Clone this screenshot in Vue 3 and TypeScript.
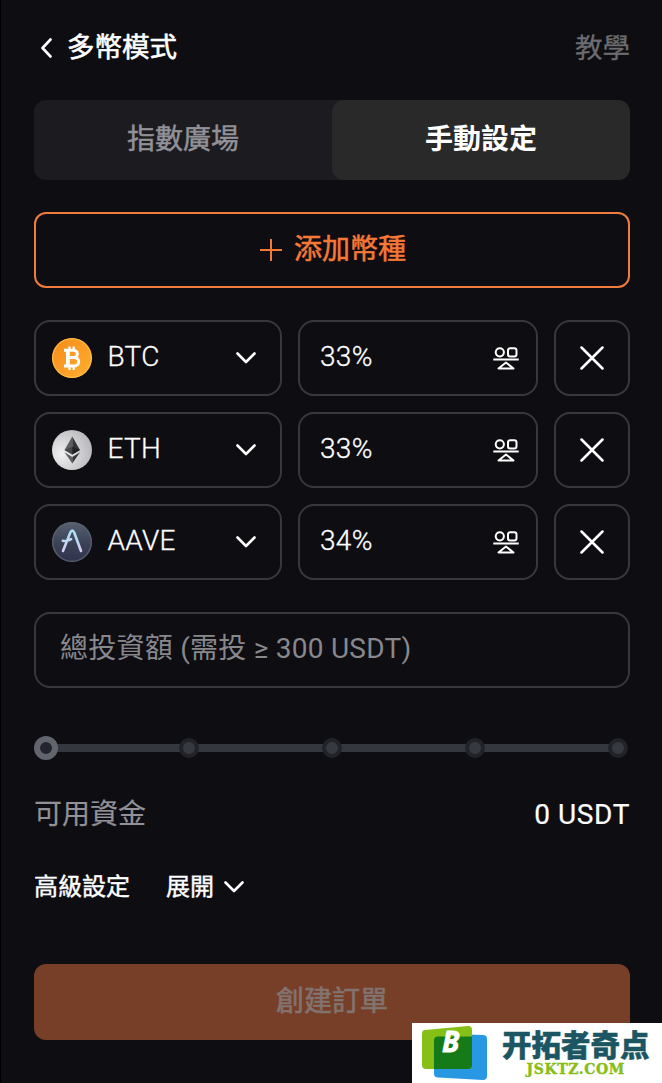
<script setup lang="ts">
interface Coin {
  symbol: string
  percent: number
}

const coins: Coin[] = [
  { symbol: 'BTC', percent: 33 },
  { symbol: 'ETH', percent: 33 },
  { symbol: 'AAVE', percent: 34 },
]
const stops = [0, 25, 50, 75, 100]
</script>

<template>
  <main class="page">
    <header class="header">
      <div class="heading">
        <svg class="back" width="12" height="20" viewBox="0 0 12 20"><path d="M10.500 1.500 2.500 10l8 8.500" /></svg>
        <h1>多幣模式</h1>
      </div>
      <span class="guide">教學</span>
    </header>

    <nav class="tabs">
      <button class="tab"><span>指數廣場</span></button>
      <button class="tab active"><span>手動設定</span></button>
    </nav>

    <button class="add">
      <svg width="22" height="24" viewBox="0 0 22 24"><path d="M11 1v22M0 12h22" /></svg>
      <span>添加幣種</span>
    </button>

    <section class="coins">
      <div v-for="coin in coins" :key="coin.symbol" class="row">
        <div class="box select">
          <svg v-if="coin.symbol === 'BTC'" class="logo" viewBox="0 0 40 40">
            <defs>
              <linearGradient id="btc" x1="0" y1="0" x2="1" y2="1">
                <stop offset="0" stop-color="#f58a1c" /><stop offset="1" stop-color="#ffb02e" />
              </linearGradient>
            </defs>
            <circle cx="20" cy="20" r="20" fill="url(#btc)" />
            <circle cx="20" cy="20" r="19.300" fill="none" stroke="#ffc44d" stroke-width="1" />
            <g class="coin-mark">
              <path d="M12 12.300h9c5.800 0 5.800 7.200 0 7.200h-5M16 19.500h6c6.300 0 6.300 8.400 0 8.400H12" stroke-width="3" />
              <path d="M15.900 11.500v17" stroke-width="3.800" />
              <path d="M17.500 8.500v4M21.700 8.500v4M17.500 28v4M21.700 28v4" stroke-width="2.200" />
            </g>
          </svg>
          <svg v-else-if="coin.symbol === 'ETH'" class="logo" viewBox="0 0 40 40">
            <defs>
              <radialGradient id="eth" cx=".25" cy=".6" r=".8">
                <stop offset="0" stop-color="#f0eff2" /><stop offset="1" stop-color="#b5b6b9" />
              </radialGradient>
            </defs>
            <circle cx="20" cy="20" r="20" fill="url(#eth)" />
            <path d="M20.300 6.500 12.500 20l7.800 4.600z" fill="#5d5e60" />
            <path d="M20.300 6.500 28 20l-7.700 4.600z" fill="#343638" />
            <path d="M12.500 20l7.800-3.300v7.900z" fill="#454749" />
            <path d="M28 20l-7.700-3.300v7.900z" fill="#202224" />
            <path d="M12.500 22.200 20.300 27v6.500z" fill="#606164" />
            <path d="M28 22.200 20.300 27v6.500z" fill="#36383a" />
          </svg>
          <svg v-else class="logo" viewBox="0 0 40 40">
            <defs>
              <linearGradient id="aave" x1="0" y1="0" x2="0" y2="1">
                <stop offset="0" stop-color="#566171" /><stop offset=".55" stop-color="#3a4155" /><stop offset="1" stop-color="#30324e" />
              </linearGradient>
              <linearGradient id="mark" x1="0" y1="0" x2="0" y2="1">
                <stop offset="0" stop-color="#a9e3f3" /><stop offset="1" stop-color="#d3cef0" />
              </linearGradient>
            </defs>
            <circle cx="20" cy="20" r="20" fill="url(#aave)" />
            <circle cx="20" cy="20" r="19.300" fill="none" stroke="#59616d" stroke-width="1.200" />
            <path d="M11 29 18.300 10.500Q20.300 6.800 22.200 10.500L29 29M10.800 18.800q4.500.7 8.300-1.600" fill="none" stroke="url(#mark)" stroke-width="2.600" />
          </svg>
          <span class="symbol">{{ coin.symbol }}</span>
          <svg class="chevron" width="20" height="12" viewBox="0 0 20 12"><path d="m1.500 1.500 8.500 8.500 8.500-8.500" /></svg>
        </div>
        <div class="box share">
          <span>{{ coin.percent }}%</span>
          <svg class="balance" width="26" height="23" viewBox="0 0 26 23">
            <circle cx="6.800" cy="5.300" r="4.100" />
            <rect x="15" y="1.200" width="8.500" height="8.300" rx="2.300" />
            <path d="M.300 12.500h25.400M13 15.500l-7.500 6h15z" />
          </svg>
        </div>
        <button class="box remove">
          <svg width="24" height="24" viewBox="0 0 24 24"><path d="m1.500 1.500 21 21m0-21-21 21" /></svg>
        </button>
      </div>
    </section>

    <div class="box amount"><span>總投資額 (需投 ≥ 300 USDT)</span></div>

    <div class="slider">
      <i v-for="stop in stops" :key="stop" :class="['stop', { current: stop === 0 }]"></i>
    </div>

    <div class="funds"><span>可用資金</span><strong>0 USDT</strong></div>

    <div class="advanced">
      <span>高級設定</span>
      <span class="expand">展開</span>
      <svg class="chevron" width="20" height="12" viewBox="0 0 20 12"><path d="m1.500 1.500 8.500 8.500 8.500-8.500" /></svg>
    </div>

    <button class="submit"><span>創建訂單</span></button>

    <aside class="watermark">
      <svg width="78" height="58" viewBox="0 0 78 58">
        <path d="M25 9.500 71 11q4 0 4 4v37q0 4-4 4l-45-2.500q-4 0-4-4V13q0-3.500 3-3.500z" fill="#2998e3" />
        <path d="M13 6 56 2q4 0 4 4v35q0 4-4 4H14q-4 0-4-4V10q0-4 3-4z" fill="#86bf16" />
        <path d="M26 12.500h34V41q0 4-4 4H22V16.500q0-4 4-4z" fill="#157a18" />
        <text x="30" y="28">B</text>
      </svg>
      <div class="brand">
        <b>开拓者奇点</b>
        <small>JSKTZ.COM</small>
      </div>
    </aside>
  </main>
</template>

<style>
body { background: #0d0d12; }
</style>

<style scoped>
* { box-sizing: border-box; }
.page {
  position: relative;
  display: flex;
  flex-direction: column;
  height: 1083px;
  padding: 0 32px 0 33px;
  overflow: hidden;
  border-left: 1px solid #000;
  background: #0d0d12;
  color: #fff;
  font: 400 28px/40px Roboto, "Noto Sans CJK TC", sans-serif;
}
button { margin: 0; padding: 0; border: 0; background: none; color: inherit; font: inherit; }
svg { display: block; flex: none; fill: none; stroke-linecap: round; stroke-linejoin: round; }
.header { display: flex; justify-content: space-between; height: 100px; padding-top: 28px; }
.heading { display: flex; gap: 15px; padding-left: 6px; }
.back { margin-top: 10px; stroke: #fff; stroke-width: 2.600; }
h1 { margin: 0; font: inherit; font-size: 27.500px; -webkit-text-stroke: .6px currentColor; }
.guide { color: #6b6b70; padding-top: 1px; font-size: 27.500px; -webkit-text-stroke: .3px currentColor; }
.tabs { display: flex; flex: none; height: 80px; border-radius: 12px; background: #1b1b20; }
.tab { flex: 1; color: #929197; -webkit-text-stroke: .5px currentColor; }
.tab.active { border-radius: 12px; background: #29292a; color: #fff; font-weight: 700; -webkit-text-stroke: 0; }
.add {
  display: flex; flex: none; align-items: center; justify-content: center; gap: 12px;
  height: 76px; margin-top: 32px; padding-left: 2px; border: 2px solid #f17b3e; border-radius: 12px; color: #f57837;
  -webkit-text-stroke: .5px currentColor;
}
.add svg { stroke: currentColor; stroke-width: 2; stroke-linecap: butt; }
.coins { display: grid; gap: 16px; margin-top: 32px; }
.row { display: grid; grid-template-columns: 248px 240px 76px; gap: 16px; }
.box { display: flex; align-items: center; height: 76px; border: 2px solid #38383d; border-radius: 16px; }
.select { padding: 0 24px 0 16px; }
.logo { width: 40px; height: 40px; }
.coin-mark { fill: none; stroke: #fff; stroke-linecap: butt; }
.symbol { margin: -2px auto 0 15.500px; font-weight: 300; letter-spacing: .3px; -webkit-text-stroke: .3px currentColor; }
.chevron { stroke: #fff; stroke-width: 2.600; }
.share { justify-content: space-between; padding: 0 17px 0 20px; }
.share span { margin-top: -2px; font-weight: 300; letter-spacing: .3px; -webkit-text-stroke: .3px currentColor; }
.balance { stroke: #fff; stroke-width: 2; stroke-linecap: butt; }
.remove { justify-content: center; }
.remove svg { stroke: #fff; stroke-width: 2.500; }
.amount { flex: none; margin-top: 32px; padding: 0 24px 2px; color: #88888c; letter-spacing: .25px; }
.slider {
  display: flex; flex: none; align-items: center; justify-content: space-between;
  height: 24px; margin-top: 48px; padding-right: 2px;
  background: linear-gradient(#34373e, #34373e) 12px 8px / 570px 8px no-repeat;
}
.stop { width: 20px; height: 20px; border: 4px solid #222328; border-radius: 50%; background: #373940; }
.stop.current { width: 24px; height: 24px; margin-right: -2px; border: 6px solid #62646e; background: #23242e; }
.funds { display: flex; justify-content: space-between; margin-top: 35px; color: #929197; -webkit-text-stroke: .2px currentColor; }
.funds strong { color: #fff; font-weight: 400; letter-spacing: .6px; margin-right: 0; }
.advanced { display: flex; align-items: center; margin-top: 32px; font-size: 24px; -webkit-text-stroke: .4px currentColor; }
.advanced .expand { margin: 0 10px 0 36px; }
.submit { flex: none; height: 76px; margin-top: 57px; border-radius: 12px; background: #783f28; color: #82736f; -webkit-text-stroke: .6px currentColor; }
.watermark { position: absolute; right: 0; bottom: 0; display: flex; width: 250px; height: 60px; background: #fff; }
.watermark svg { margin-top: 1px; }
.watermark text { fill: #fff; stroke: #fff; stroke-width: .8; font: italic 700 28px "Open Sans", sans-serif; }
.brand { display: flex; flex-direction: column; align-items: center; margin-left: 12px; }
.brand b { margin-top: 5px; color: #1b5662; font: 900 29.500px/30px "Noto Sans CJK SC", sans-serif; -webkit-text-stroke: .5px #1b5662; }
.brand small { margin-top: 3px; color: #87bd15; font: 700 14px/16px "DejaVu Serif", serif; letter-spacing: .6px; -webkit-text-stroke: .4px #87bd15; }
</style>
